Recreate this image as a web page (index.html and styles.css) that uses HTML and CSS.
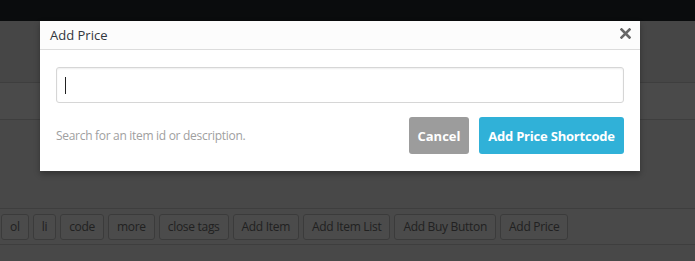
FILE: index.html
```html
<!DOCTYPE html>
<html lang="en">
<head>
<meta charset="utf-8">
<title>Add Price</title>
<link rel="stylesheet" href="styles.css">
</head>
<body>
<div class="page">
  <div class="adminbar"></div>
  <div class="band band-top"></div>
  <div class="band band-mid"></div>
  <div class="band band-main"></div>
  <div class="quicktags">
    <button class="qt">ol</button>
    <button class="qt">li</button>
    <button class="qt">code</button>
    <button class="qt">more</button>
    <button class="qt">close tags</button>
    <button class="qt">Add Item</button>
    <button class="qt">Add Item List</button>
    <button class="qt">Add Buy Button</button>
    <button class="qt">Add Price</button>
  </div>
  <div class="band band-bottom"></div>
</div>
<div class="overlay"></div>
<div class="dialog">
  <div class="dialog-head">
    <span class="dialog-title">Add Price</span>
    <svg class="close" width="11" height="11" viewBox="0 0 11 11" aria-label="Close">
      <path d="M1.5 1.5 L9.5 9.5 M9.5 1.5 L1.5 9.5" stroke="#666" stroke-width="2.6" stroke-linecap="square"/>
    </svg>
  </div>
  <div class="dialog-body">
    <div class="field">
      <input class="search" type="text">
      <span class="caret"></span>
    </div>
    <div class="actions">
      <span class="hint">Search for an item id or description.</span>
      <button class="btn btn-cancel">Cancel</button>
      <button class="btn btn-primary">Add Price Shortcode</button>
    </div>
  </div>
</div>
</body>
</html>
```
FILE: styles.css
```css
html, body {
  margin: 0;
  padding: 0;
}
body {
  width: 695px;
  height: 261px;
  overflow: hidden;
  position: relative;
  font-family: "Open Sans", "Noto Sans", sans-serif;
  background: #f1f1f1;
}
.page {
  display: flex;
  flex-direction: column;
}
.adminbar {
  height: 21px;
  background: #23282d;
}
.band-top {
  height: 61px;
  background: #ececec;
  border-bottom: 1px solid #cfcfcf;
}
.band-mid {
  height: 36px;
  background: #f7f7f7;
  border-bottom: 1px solid #cfcfcf;
}
.band-main {
  height: 88px;
  background: #f1f1f1;
  border-bottom: 1px solid #cfcfcf;
}
.quicktags {
  height: 36px;
  box-sizing: border-box;
  background: #f6f6f6;
  border-bottom: 1px solid #cfcfcf;
  display: flex;
  align-items: flex-start;
  gap: 4px;
  padding: 5px 0 0 1px;
}
.qt {
  height: 26px;
  box-sizing: border-box;
  padding: 0 8px;
  margin: 0;
  border: 1px solid #c6c6c6;
  border-radius: 3px;
  background: #fafafa;
  color: #707070;
  font-family: "Open Sans", "Noto Sans", sans-serif;
  font-size: 12px;
  letter-spacing: -0.3px;
  line-height: 24px;
  white-space: nowrap;
}
.band-bottom {
  flex: 1;
  background: #f1f1f1;
}
.overlay {
  position: absolute;
  inset: 0;
  background: rgba(0, 0, 0, 0.7);
}
.dialog {
  position: absolute;
  left: 40px;
  top: 21px;
  width: 600px;
  height: 150px;
  background: #fff;
  box-shadow: 0 3px 6px rgba(0, 0, 0, 0.3);
  display: flex;
  flex-direction: column;
}
.dialog-head {
  height: 29px;
  box-sizing: border-box;
  background: #fcfcfc;
  border-bottom: 1px solid #dcdcdc;
  display: flex;
  align-items: center;
  justify-content: space-between;
  padding: 0 9px 1px 10px;
}
.dialog-title {
  font-size: 13px;
  color: #32373c;
}
.close {
  display: block;
  margin-bottom: 2px;
}
.dialog-body {
  padding: 17px 16px 16px;
  display: flex;
  flex-direction: column;
  gap: 14px;
}
.field {
  position: relative;
}
.search {
  display: block;
  width: 100%;
  height: 36px;
  box-sizing: border-box;
  margin: 0;
  border: 1px solid #d6d6d6;
  border-radius: 3px;
  box-shadow: inset 0 1px 2px rgba(0, 0, 0, 0.07);
  background: #fff;
  outline: none;
}
.caret {
  position: absolute;
  left: 9px;
  top: 10px;
  width: 1px;
  height: 17px;
  background: #222;
}
.actions {
  display: flex;
  align-items: center;
  gap: 10px;
}
.hint {
  flex: 1;
  font-size: 12px;
  letter-spacing: -0.3px;
  color: #a0a0a0;
}
.btn {
  height: 37px;
  box-sizing: border-box;
  border: 0;
  border-radius: 3px;
  margin: 0;
  color: #fff;
  font-family: "Open Sans", "Noto Sans", sans-serif;
  font-weight: 700;
  font-size: 13px;
  white-space: nowrap;
}
.btn-cancel {
  width: 60px;
  padding: 0;
  background: #9c9c9c;
}
.btn-primary {
  width: 145px;
  padding: 0;
  letter-spacing: -0.2px;
  background: #30b1d8;
}
```
